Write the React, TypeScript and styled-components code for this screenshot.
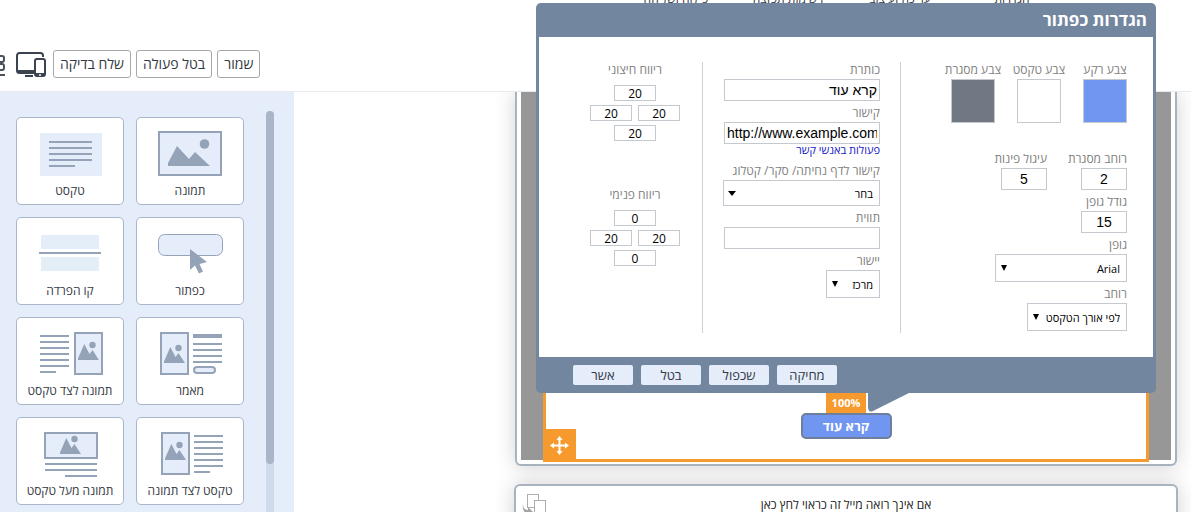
import React, { useId } from "react";
import styled, { createGlobalStyle, css } from "styled-components";

const color = {
  slate: "#73869f",
  pale: "#e5edfb",
  edge: "#a9b5c9",
  icon: "#94a3b8",
  field: "#c4c8cf",
  label: "#808080",
  ink: "#333842",
  orange: "#f79a2d",
  blue: "#7096f2",
};

const GlobalStyle = createGlobalStyle`
  *, *::before, *::after { box-sizing: border-box; }
  body {
    margin: 0;
    background: #fff;
    color: ${color.ink};
    font-family: "Open Sans", "Liberation Sans", sans-serif;
    font-size: 12px;
  }
  button, input, select { font: inherit; color: inherit; margin: 0; }
`;

const Page = styled.div`
  display: flex;
  flex-direction: column;
  height: 100vh;
  overflow: hidden;
`;

/* ---------- top bar ---------- */

const TopBar = styled.header`
  position: relative;
  z-index: 1;
  display: flex;
  justify-content: space-between;
  align-items: flex-start;
  flex: none;
  padding-bottom: 13px;
  background: #fff;
  border-bottom: 1px solid #e6e9ee;
`;

const Toolbar = styled.div`
  display: flex;
  align-items: center;
  gap: 5px;
  padding-top: 50px;
`;

const ToolButton = styled.button`
  height: 28px;
  padding: 0 6px;
  background: #fff;
  border: 1px solid #a8a8a8;
  border-radius: 3px;
  font-size: 14px;
  line-height: 24px;
  white-space: nowrap;
`;

const IconButton = styled.button`
  display: flex;
  padding: 0;
  background: none;
  border: 0;
`;

const GridButton = styled(IconButton)`
  margin-left: -14px;
  margin-right: 5px;
`;

const Nav = styled.nav`
  display: flex;
  margin-top: -9px;
  padding-right: 123px;
`;

const NavLink = styled.a`
  width: 112px;
  color: ${color.ink};
  font-size: 12px;
  line-height: 16px;
  text-align: center;
  text-decoration: none;
  white-space: nowrap;
`;

/* ---------- sidebar ---------- */

const Columns = styled.div`
  display: flex;
  flex: 1;
  min-height: 0;
`;

const Sidebar = styled.aside`
  display: flex;
  align-items: flex-start;
  gap: 22px;
  flex: none;
  width: 294px;
  padding-left: 16px;
  background: ${color.pale};
`;

const Blocks = styled.div`
  display: grid;
  grid-template-columns: 108px 108px;
  gap: 12px;
  padding-top: 25px;
`;

const BlockCard = styled.button`
  display: flex;
  flex-direction: column;
  align-items: center;
  height: 88px;
  padding: 7px 0 0;
  background: #fff;
  border: 1px solid ${color.edge};
  border-radius: 5px;
  line-height: 16px;
  white-space: nowrap;
`;

const BlockLabel = styled.span`
  margin-top: 4px;
`;

const Track = styled.div`
  align-self: stretch;
  width: 8px;
  margin-top: 19px;
  background: #cfdaeb;
  border-radius: 4px 4px 0 0;
`;

const Thumb = styled.div`
  height: 88%;
  background: ${color.edge};
  border-radius: 4px;
`;

/* ---------- canvas ---------- */

const Canvas = styled.main`
  display: flex;
  flex: 1;
  flex-direction: column;
  align-items: flex-end;
  min-width: 0;
  padding-right: 13px;
`;

const Sheet = styled.section`
  width: 74%;
  min-width: 664px;
  flex: none;
  background: #fff;
  border: 2px solid #a9b3c0;
  border-radius: 6px;
  box-shadow: 0 0 20px rgba(60, 64, 60, 0.24);
`;

const MailSheet = styled(Sheet)`
  min-width: 662px;
  margin: 0 1px;
  padding: 0 4px 4px;
  border-top: 0;
  border-radius: 0 0 6px 6px;
`;

const Backdrop = styled.div`
  display: flow-root;
  padding: 0 22px;
  background: #979797;
`;

const Selected = styled.div`
  position: relative;
  display: flex;
  flex-direction: column;
  align-items: center;
  justify-content: flex-end;
  min-height: 370px;
  margin-bottom: -2px;
  padding-bottom: 20px;
  background: #fff;
  border: 3px solid ${color.orange};
  border-top: 0;
`;

const Percent = styled.span`
  padding: 0 6px;
  background: ${color.orange};
  color: #fff;
  font-size: 11px;
  font-weight: 700;
  line-height: 20px;
`;

const MailButton = styled.button`
  width: 91px;
  height: 26px;
  padding: 0;
  background: ${color.blue};
  border: 2px solid #6d7f9b;
  border-radius: 5px;
  color: #fff;
  font-size: 13px;
  font-weight: 700;
  line-height: 20px;
`;

const MoveHandle = styled.button`
  position: absolute;
  left: -3px;
  bottom: -3px;
  display: flex;
  align-items: center;
  justify-content: center;
  width: 33px;
  height: 33px;
  padding: 0;
  background: ${color.orange};
  border: 0;
`;

const NextSheet = styled(Sheet)`
  position: relative;
  margin-top: 18px;
  padding: 10px 0 20px;
  color: #222;
  line-height: 18px;
  text-align: center;
`;

const CopyButton = styled(IconButton)`
  position: absolute;
  left: 6px;
  top: 7px;
`;

/* ---------- settings dialog ---------- */

const Dialog = styled.form`
  position: absolute;
  z-index: 2;
  right: -10px;
  bottom: 66px;
  width: 620px;
  background: ${color.slate};
  border-radius: 5px;
  direction: rtl;
`;

const DialogTitle = styled.h2`
  margin: 0;
  padding: 0 9px;
  color: #fff;
  font-size: 17px;
  font-weight: 700;
  line-height: 34px;
`;

const DialogBody = styled.div`
  display: grid;
  grid-template-columns: 226px 198px 1fr;
  margin: 0 3px;
  padding: 25px 26px 24px 0;
  background: #fff;
`;

const Column = styled.div<{ $ruled?: boolean }>`
  display: flex;
  flex-direction: column;
  gap: 4px;
  min-height: 271px;
  ${(p) =>
    p.$ruled &&
    css`
      padding: 0 20px 0 0;
      border-right: 1px solid #cdd1d8;
    `}
`;

const SpacingColumn = styled(Column)`
  align-items: flex-start;
  gap: 46px;
  padding-right: 22px;
`;

const Row = styled.div<{ $gap: number; $below?: number }>`
  display: flex;
  gap: ${(p) => p.$gap}px;
  margin-bottom: ${(p) => p.$below ?? 0}px;
`;

const FieldBox = styled.div<{ $width?: number; $center?: boolean }>`
  display: flex;
  flex-direction: column;
  align-items: ${(p) => (p.$center ? "center" : "flex-start")};
  gap: 1px;
  width: ${(p) => (p.$width ? `${p.$width}px` : "auto")};
`;

const Label = styled.label`
  color: ${color.label};
  font-size: 12px;
  line-height: 16px;
  white-space: nowrap;
`;

const TextInput = styled.input<{ $width: number; $align?: string }>`
  width: ${(p) => p.$width}px;
  height: 22px;
  padding: 0 2px;
  background: #fff;
  border: 1px solid ${color.field};
  color: #000;
  font-family: "Liberation Sans", sans-serif;
  font-size: 14px;
  text-align: ${(p) => p.$align ?? "center"};
`;

const Swatch = styled.button<{ $fill: string }>`
  width: 44px;
  height: 44px;
  padding: 0;
  background: ${(p) => p.$fill};
  border: 1px solid ${color.field};
`;

const ContactLink = styled.a`
  display: block;
  margin-bottom: 3px;
  color: #1414c8;
  font-size: 11px;
  line-height: 12px;
  text-decoration: none;
`;

const SelectWrap = styled.span<{ $width: number; $height: number }>`
  position: relative;
  display: flex;
  width: ${(p) => p.$width}px;
  height: ${(p) => p.$height}px;
`;

const SelectBox = styled.select`
  width: 100%;
  padding: 0 6px 0 16px;
  appearance: none;
  background: #fff;
  border: 1px solid ${color.field};
  border-radius: 0;
  color: #000;
  font-size: 11px;
`;

const Arrow = styled.svg`
  position: absolute;
  left: 5px;
  top: 50%;
  margin-top: -3px;
  pointer-events: none;
`;

const SpacingGroup = styled.fieldset`
  display: grid;
  grid-template-columns: 42px 42px;
  gap: 4px 6px;
  margin: 0;
  padding: 0;
  border: 0;
`;

const Legend = styled.legend`
  width: 100%;
  margin-bottom: 7px;
  padding: 0;
  color: ${color.label};
  font-size: 12px;
  line-height: 16px;
  text-align: center;
`;

const SpacingInput = styled.input<{ $wide?: boolean }>`
  width: 42px;
  height: 16px;
  padding: 0;
  border: 1px solid ${color.field};
  background: #fff;
  color: #000;
  font-size: 12px;
  line-height: 14px;
  text-align: center;
  ${(p) =>
    p.$wide &&
    css`
      grid-column: 1 / -1;
      justify-self: center;
    `}
`;

const DialogFooter = styled.div`
  display: flex;
  gap: 8px;
  padding: 8px 37px;
  direction: ltr;
`;

const DialogButton = styled.button`
  width: 60px;
  height: 20px;
  padding: 0;
  background: ${color.pale};
  border: 0;
  border-radius: 2px;
  font-size: 13px;
  line-height: 20px;
`;

const Tail = styled.svg`
  position: absolute;
  top: 100%;
  left: 332px;
  display: block;
`;

/* ---------- drawings ---------- */

const Peaks = ({ x = 0, y = 0 }: { x?: number; y?: number }) => (
  <g transform={`translate(${x} ${y})`} fill={color.icon}>
    <path d="M14 38V36.500L20.300 22L25.500 32L28.500 28L35 38Z" />
    <circle cx="28.500" cy="23" r="3.200" />
  </g>
);

const Frame = ({ x, y, w, h }: { x: number; y: number; w: number; h: number }) => (
  <rect x={x} y={y} width={w} height={h} fill={color.pale} stroke={color.icon} strokeWidth="2" />
);

const Lines = ({ x1, x2, ys }: { x1: number; x2: number; ys: number[] }) => (
  <path d={ys.map((y) => `M${x1} ${y}H${x2}`).join("")} stroke={color.icon} strokeWidth="2" />
);

const drawings: Record<string, React.ReactNode> = {
  text: (
    <>
      <rect x="10" y="8" width="62" height="43" fill={color.pale} />
      <Lines x1={19} x2={62} ys={[17, 23, 29, 35]} />
      <Lines x1={19} x2={45} ys={[41]} />
    </>
  ),
  image: (
    <>
      <Frame x={9} y={7} w={62} h={43} />
      <path d="M18 41V38L27 21L39 34L45 27L60 41Z" fill={color.icon} />
      <circle cx="54.500" cy="19" r="4.800" fill={color.icon} />
    </>
  ),
  divider: (
    <>
      <path d="M11 10H69V24H11ZM11 32H69V46H11Z" fill="#e4eef9" />
      <Lines x1={9} x2={71} ys={[28]} />
    </>
  ),
  button: (
    <>
      <rect x="8.500" y="9.500" width="64" height="21" rx="6" fill={color.pale} stroke={color.icon} />
      <path d="M40 24V45L45 40.500L49 48.500L53 46.500L49.500 39L57 37Z" fill={color.icon} />
    </>
  ),
  imageBesideText: (
    <>
      <Lines x1={10} x2={39} ys={[11, 17, 23, 29, 35, 41]} />
      <Lines x1={10} x2={26} ys={[47]} />
      <Frame x={45} y={8} w={27} h={41} />
      <Peaks x={34} y={-3} />
    </>
  ),
  article: (
    <>
      <Frame x={11} y={8} w={27} h={41} />
      <Peaks />
      <path d="M43 11H72" stroke={color.icon} strokeWidth="4" />
      <Lines x1={43} x2={72} ys={[19, 25, 31, 37]} />
      <rect x="44" y="42" width="21" height="6" rx="3" fill={color.pale} stroke={color.icon} strokeWidth="2" />
    </>
  ),
  imageAboveText: (
    <>
      <Frame x={15} y={8} w={52} h={25} />
      <Peaks x={16} y={-9} />
      <Lines x1={15} x2={67} ys={[39, 45]} />
      <Lines x1={35} x2={67} ys={[51]} />
    </>
  ),
  textBesideImage: (
    <>
      <Frame x={12} y={8} w={27} h={41} />
      <Peaks x={1} y={-3} />
      <Lines x1={44} x2={73} ys={[11, 17, 23, 29, 35, 41]} />
      <Lines x1={44} x2={60} ys={[47]} />
    </>
  ),
};

const blocks: [string, string][] = [
  ["text", "טקסט"],
  ["image", "תמונה"],
  ["divider", "קו הפרדה"],
  ["button", "כפתור"],
  ["imageBesideText", "תמונה לצד טקסט"],
  ["article", "מאמר"],
  ["imageAboveText", "תמונה מעל טקסט"],
  ["textBesideImage", "טקסט לצד תמונה"],
];

const DevicesIcon = () => (
  <svg width="32" height="28" viewBox="1 0 32 28" fill="none" stroke="#3b4250" strokeWidth="2">
    <path d="M19 23H4.500A2.500 2.500 0 0 1 2 20.500V5.500A2.500 2.500 0 0 1 4.500 3H25.500A2.500 2.500 0 0 1 28 5.500V7" />
    <path d="M2 21.500H19" strokeWidth="3" />
    <path d="M10 26H18" />
    <rect x="20" y="9" width="10" height="17" rx="2" fill="#fff" />
    <path d="M20 24.500H30" strokeWidth="3" />
    <circle cx="25" cy="25" r="1" fill="#fff" stroke="none" />
  </svg>
);

const GridIcon = () => (
  <svg width="20" height="28" viewBox="0 0 20 28" fill="none" stroke="#4a505c" strokeWidth="2">
    <rect x="1" y="6" width="7" height="6" rx="2" />
    <rect x="11" y="6" width="7" height="6" rx="2" />
    <rect x="1" y="14" width="7" height="6" rx="2" />
    <rect x="11" y="14" width="7" height="6" rx="2" />
    <path d="M1 25H19" />
  </svg>
);

const MoveIcon = () => (
  <svg width="19" height="19" viewBox="0 0 19 19" fill="#fff">
    <path d="M8.500 3H10.500V16H8.500Z" />
    <path d="M3 8.500V10.500H16V8.500Z" />
    <path d="M9.500 0L12.500 4H6.500ZM9.500 19L6.500 15H12.500ZM0 9.500L4 6.500V12.500ZM19 9.500L15 12.500V6.500Z" />
  </svg>
);

const CopyIcon = () => (
  <svg width="26" height="26" viewBox="0 0 26 26" fill="#fff" stroke="#adadad" strokeWidth="1">
    <rect x="5.500" y="1.500" width="11" height="13" />
    <rect x="12.500" y="7.500" width="11" height="14" />
    <path d="M1 11C1 15 3 17 6 17V14L11 19L6 24V21C2 20 0 16 1 11Z" fill="#a3a3a3" stroke="none" />
  </svg>
);

/* ---------- controls ---------- */

type TextFieldProps = { label: string; value: string; width: number; align?: string; dir?: string; box?: number };

function TextField({ label, value, width, align, dir, box }: TextFieldProps) {
  const id = useId();
  return (
    <FieldBox $width={box}>
      <Label htmlFor={id}>{label}</Label>
      <TextInput id={id} defaultValue={value} dir={dir} $width={width} $align={align} />
    </FieldBox>
  );
}

type SelectFieldProps = { label: string; value: string; width: number; height?: number; wideArrow?: boolean };

function SelectField({ label, value, width, height = 28, wideArrow }: SelectFieldProps) {
  const id = useId();
  return (
    <FieldBox>
      <Label htmlFor={id}>{label}</Label>
      <SelectWrap $width={width} $height={height}>
        <SelectBox id={id} defaultValue={value}>
          <option>{value}</option>
        </SelectBox>
        <Arrow width="8" height="6" viewBox="0 0 8 6">
          <path d={wideArrow ? "M0 1H8L4 6Z" : "M1 0H7L4 6Z"} />
        </Arrow>
      </SelectWrap>
    </FieldBox>
  );
}

function ColorField({ label, fill }: { label: string; fill: string }) {
  const id = useId();
  return (
    <FieldBox $width={44} $center>
      <Label htmlFor={id}>{label}</Label>
      <Swatch id={id} type="button" $fill={fill} />
    </FieldBox>
  );
}

function SpacingField({ label, values }: { label: string; values: string[] }) {
  const sides = ["עליון", "ימין", "שמאל", "תחתון"];
  return (
    <SpacingGroup>
      <Legend>{label}</Legend>
      {values.map((v, i) => (
        <SpacingInput key={i} aria-label={`${label} ${sides[i]}`} defaultValue={v} $wide={i === 0 || i === 3} />
      ))}
    </SpacingGroup>
  );
}

function ButtonSettings() {
  return (
    <Dialog>
      <DialogTitle>הגדרות כפתור</DialogTitle>
      <DialogBody>
        <Column>
          <Row $gap={22} $below={24}>
            <ColorField label="צבע רקע" fill={color.blue} />
            <ColorField label="צבע טקסט" fill="#ffffff" />
            <ColorField label="צבע מסגרת" fill="#717883" />
          </Row>
          <Row $gap={34}>
            <TextField label="רוחב מסגרת" value="2" width={46} box={46} />
            <TextField label="עיגול פינות" value="5" width={46} box={46} />
          </Row>
          <TextField label="גודל גופן" value="15" width={46} />
          <SelectField label="גופן" value="Arial" width={132} />
          <SelectField label="רוחב" value="לפי אורך הטקסט" width={100} />
        </Column>
        <Column $ruled>
          <TextField label="כותרת" value="קרא עוד" width={156} align="right" />
          <div>
            <TextField label="קישור" value="http://www.example.com" width={156} align="left" dir="ltr" />
            <ContactLink href="#contacts">פעולות באנשי קשר</ContactLink>
          </div>
          <SelectField label="קישור לדף נחיתה/ סקר/ קטלוג" value="בחר" width={157} height={26} wideArrow />
          <TextField label="תווית" value="" width={156} />
          <SelectField label="יישור" value="מרכז" width={54} />
        </Column>
        <SpacingColumn $ruled>
          <SpacingField label="ריווח חיצוני" values={["20", "20", "20", "20"]} />
          <SpacingField label="ריווח פנימי" values={["0", "20", "20", "0"]} />
        </SpacingColumn>
      </DialogBody>
      <DialogFooter>
        <DialogButton type="button">אשר</DialogButton>
        <DialogButton type="button">בטל</DialogButton>
        <DialogButton type="button">שכפול</DialogButton>
        <DialogButton type="button">מחיקה</DialogButton>
      </DialogFooter>
      <Tail width="42" height="19" viewBox="0 0 42 19">
        <path d="M0 0H41L5 18Q1 20 0 15Z" fill={color.slate} />
      </Tail>
    </Dialog>
  );
}

export default function App() {
  return (
    <Page>
      <GlobalStyle />
      <TopBar>
        <Toolbar>
          <GridButton aria-label="תצוגת רשת">
            <GridIcon />
          </GridButton>
          <IconButton aria-label="תצוגת מכשירים">
            <DevicesIcon />
          </IconButton>
          <ToolButton>שלח בדיקה</ToolButton>
          <ToolButton>בטל פעולה</ToolButton>
          <ToolButton>שמור</ToolButton>
        </Toolbar>
        <Nav dir="ltr">
          <NavLink href="#send">פילוח ושליחה</NavLink>
          <NavLink href="#lists">רשימות תפוצה</NavLink>
          <NavLink href="#design">עריכה ועיצוב</NavLink>
          <NavLink href="#settings">הגדרות</NavLink>
        </Nav>
      </TopBar>
      <Columns>
        <Sidebar>
          <Blocks>
            {blocks.map(([kind, label]) => (
              <BlockCard key={kind}>
                <svg width="80" height="54" viewBox="0 0 80 54">
                  {drawings[kind]}
                </svg>
                <BlockLabel>{label}</BlockLabel>
              </BlockCard>
            ))}
          </Blocks>
          <Track>
            <Thumb />
          </Track>
        </Sidebar>
        <Canvas>
          <MailSheet>
            <Backdrop>
              <Selected>
                <Percent>100%</Percent>
                <MailButton>קרא עוד</MailButton>
                <MoveHandle aria-label="הזזה">
                  <MoveIcon />
                </MoveHandle>
                <ButtonSettings />
              </Selected>
            </Backdrop>
          </MailSheet>
          <NextSheet dir="rtl">
            אם אינך רואה מייל זה כראוי לחץ כאן
            <CopyButton aria-label="שכפול">
              <CopyIcon />
            </CopyButton>
          </NextSheet>
        </Canvas>
      </Columns>
    </Page>
  );
}
